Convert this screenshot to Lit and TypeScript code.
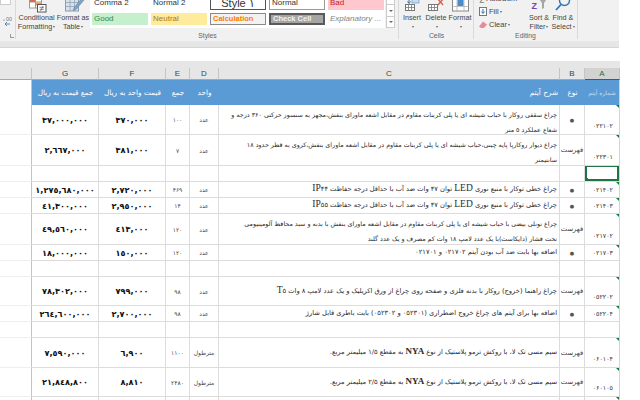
import { LitElement, html, css, svg } from "lit";
import { customElement } from "lit/decorators.js";

type Row = { h: number; g?: string; f?: string; e?: string; d?: string; c?: string[]; b?: string; a?: string; mark?: boolean; sel?: boolean };

const rows: Row[] = [
  { h: 30, g: "۳۷,۰۰۰,۰۰۰", f: "۳۷۰,۰۰۰", e: "۱۰۰", d: "عدد", c: ["چراغ سقفی روکار با حباب شیشه ای یا پلی کربنات مقاوم در مقابل اشعه ماورای بنفش،مجهز به سنسور حرکتی ۳۶۰ درجه و", "شعاع عملکرد ۵ متر"], b: "●", a: "۰۲۲۱۰۲", mark: true },
  { h: 31, g: "۲,٦٦۷,۰۰۰", f: "۳۸۱,۰۰۰", e: "۷", d: "عدد", c: ["چراغ دیوار روکارپا پایه چینی،حباب شیشه ای یا پلی کربنات مقاوم در مقابل اشعه ماورای بنفش،کروی به قطر حدود ۱۸", "سانتیمتر"], b: "فهرست", a: "۰۲۲۳۰۱", mark: true },
  { h: 16, sel: true },
  { h: 16, g: "۱,۲۷٥,٦۸۰,۰۰۰", f: "۲,۷۲۰,۰۰۰", e: "۴۶۹", d: "عدد", c: ["چراغ خطی توکار با منبع نوری LED توان ۴۷ وات ضد آب با حداقل درجه حفاظت IP۴۴"], b: "●", a: "۰۲۱۴۰۲", mark: true },
  { h: 16, g: "٤۱,۳۰۰,۰۰۰", f: "۲,۹٥۰,۰۰۰", e: "۱۴", d: "عدد", c: ["چراغ خطی توکار با منبع نوری LED توان ۴۷ وات ضد آب با حداقل درجه حفاظت IP۵۵"], b: "●", a: "۰۲۱۴۰۳", mark: true },
  { h: 31, g: "٤۹,٥٦۰,۰۰۰", f: "٤۱۳,۰۰۰", e: "۱۲۰", d: "عدد", c: ["چراغ تونلی بیضی با حباب شیشه ای یا پلی کربنات مقاوم در مقابل اشعه ماورای بنفش با بدنه و سبد محافظ آلومینیومی", "تحت فشار (دایکاست)با یک عدد لامپ ۱۸ وات کم مصرف و یک عدد گلند"], b: "فهرست", a: "۰۲۱۷۰۲", mark: true },
  { h: 16, g: "۱۸,۰۰۰,۰۰۰", f: "۱٥۰,۰۰۰", e: "۱۲۰", d: "عدد", c: ["اضافه بها بابت ضد آب بودن آیتم ۰۲۱۷۰۲ و ۰۲۱۷۰۱"], b: "●", a: "۰۲۱۷۰۳", mark: true },
  { h: 16 },
  { h: 29, g: "۷۸,۳۰۲,۰۰۰", f: "۷۹۹,۰۰۰", e: "۹۸", d: "عدد", c: ["چراغ راهنما (خروج) روکار با بدنه فلزی و صفحه روی چراغ از ورق اکریلیک و یک عدد لامپ ۸ وات T۵"], b: "فهرست", a: "۰۵۲۲۰۲", mark: true },
  { h: 16, g: "۲٦٤,٦۰۰,۰۰۰", f: "۲,۷۰۰,۰۰۰", e: "۹۸", d: "عدد", c: ["اضافه بها برای آیتم های چراغ خروج اضطراری (۰۵۲۳۰۱ و ۰۵۲۳۰۲) بابت باطری قابل شارژ"], b: "●", a: "۰۵۲۲۰۴", mark: true },
  { h: 16 },
  { h: 30, g: "۷,٥۹۰,۰۰۰", f: "٦,۹۰۰", e: "۱۱۰۰", d: "مترطول", c: ["سیم مسی تک لا، با روکش ترمو پلاستیک از نوع NYA به مقطع ۱/۵ میلیمتر مربع."], b: "فهرست", a: "۰۶۰۱۰۴", mark: true },
  { h: 29, g: "۲۱,۸٤۸,۸۰۰", f: "۸,۸۱۰", e: "۲۴۸۰", d: "مترطول", c: ["سیم مسی تک لا، با روکش ترمو پلاستیک از نوع NYA به مقطع ۲/۵ میلیمتر مربع."], b: "فهرست", a: "۰۶۰۱۰۵", mark: true },
  { h: 16, mark: true },
];

const icons = {
  cond: svg`<rect x="4.5" y="-2" width="12" height="10" fill="#fff" stroke="#9a9a9a"/><path d="M4.5 2h12M10.5 -2v10" stroke="#9a9a9a"/><rect x="5" y="-1" width="5" height="3" fill="#d9694f"/><rect x="11" y="2.5" width="5" height="3" fill="#e8a04f"/><rect x="12.5" y="4.5" width="8.5" height="7.5" fill="#fff" stroke="#555"/><path d="M14.5 7.3h4.5M14.5 9.3h4.5M18 6l-2.5 5" stroke="#444" stroke-width=".6" fill="none"/>`,
  table: svg`<rect x="4.5" y="-2" width="13" height="13" fill="#d5e2ee" stroke="#8c9cab"/><path d="M4.5 2.5h13M4.5 6.5h13M9 -2v13M13.500 -2v13" stroke="#8c9cab" stroke-width=".7"/><path d="M21 -2l-7.500 9-1.500 3.500 3.500-1.500 7.500-9z" fill="#7fa3c4" stroke="#5d7f9f" stroke-width=".5"/>`,
  insert: svg`<rect x="5.500" y="4.500" width="9" height="6" fill="#fff" stroke="#777"/><path d="M5.500 7.500h9M8.500 4.500v6M11.500 4.500v6" stroke="#777" stroke-width=".8"/><rect x="12" y="-2" width="7" height="5" fill="#c9dcee" stroke="#6b99c4" stroke-width=".7"/><path d="M9 0v3M7.500 1.500L9 3.500l1.500-2" stroke="#2e75b6" fill="none"/>`,
  del: svg`<rect x="4.500" y="4.500" width="9" height="6" fill="#fff" stroke="#777"/><path d="M4.500 7.500h9M7.500 4.500v6M10.500 4.500v6" stroke="#777" stroke-width=".8"/><path d="M14 -1l5 6M19 -1l-5 6" stroke="#d9604a" stroke-width="1.400"/>`,
  format: svg`<rect x="4.500" y="-2" width="16" height="13" fill="#fff" stroke="#888"/><path d="M4.500 6.500h16M9 -2v13M16 -2v13" stroke="#aaa" stroke-width=".7"/><rect x="9.500" y="-2" width="6" height="8" fill="#4a8ccb"/>`,
  sort: svg`<text x="4.500" y="8.500" font-size="9" font-family="Liberation Sans" font-weight="bold" fill="#7d3fb0">Z</text><path d="M11.500 -2h9l-3.500 5v5l-2 1V3z" fill="#a6a6a6"/>`,
  find: svg`<circle cx="13.500" cy="0.500" r="5" fill="none" stroke="#2e75b6" stroke-width="1.400"/><path d="M10 4.500l-5 5.500" stroke="#2e75b6" stroke-width="1.800"/>`,
};

@customElement("app-root")
export class AppRoot extends LitElement {
  static styles = css`
    :host { display: block; width: 640px; height: 400px; overflow: hidden; background: #fff; font-family: "Liberation Sans", sans-serif; }
    .frame { width: 620px; height: 400px; display: flex; flex-direction: column; overflow: hidden; }
    .ribbon { height: 41px; width: 619px; background: #f1f1f1; display: flex; flex: none; color: #444; font-size: 7.2px; overflow: hidden; }
    .tail { height: 7px; width: 619px; flex: none; background: #e6e6e6; border-bottom: 1px solid #d6d6d6; box-sizing: border-box; }
    .bar { height: 13px; flex: none; background: #fff; }
    .group { display: flex; flex-direction: column; border-right: 1px solid #d9d9d9; flex: none; box-sizing: border-box; height: 39px; }
    .gbody { height: 32px; display: flex; flex: none; }
    .glabel { height: 7px; font-size: 6.8px; line-height: 8px; text-align: center; color: #666; white-space: nowrap; }
    .left { width: 16px; position: relative; }
    .combo { width: 11px; height: 5px; background: #fff; border: 1px solid #ccc; border-top: 0; box-sizing: border-box; }
    .leftbody { display: flex; flex-direction: column; }
    .dec { display: block; margin-top: 10px; }
    .launch { position: absolute; left: 10px; bottom: 1px; width: 4px; height: 4px; border: 1px solid #999; box-sizing: border-box; border-top: 0; border-right: 0; }
    .stylesgroup { width: 383px; padding-left: 1px; }
    .cellsgroup { width: 75px; padding-left: 1px; }
    .editing { width: 104px; padding-left: 5px; }
    .editing .glabel { margin-left: -5px; }
    .big { display: flex; flex-direction: column; align-items: center; text-align: center; line-height: 9px; white-space: nowrap; flex: none; }
    .big svg { display: block; height: 13px; width: 24px; flex: none; overflow: visible; }
    .w39 { width: 39px; }
    .w34 { width: 34px; }
    .w24 { width: 24px; }
    .w26 { width: 26px; }
    .w22 { width: 22px; }
    .caret { display: inline-block; width: 0; height: 0; border-left: 1.5px solid transparent; border-right: 1.5px solid transparent; border-top: 2px solid #666; vertical-align: 1px; margin-left: 1px; }
    .gallery { flex: none; width: 295px; height: 28px; background: #fff; display: grid; grid-template-columns: repeat(5, 56px); grid-template-rows: 10px 12px; gap: 3px; padding: 0 0 0 2px; box-sizing: border-box; overflow: hidden; }
    .sty { font-size: 8px; line-height: 12px; padding-left: 2px; white-space: nowrap; overflow: hidden; color: #333; box-sizing: border-box; }
    .top { line-height: 6px; }
    .good { background: #c6efce; color: #2f8a3e; }
    .neutral { background: #ffeb9c; color: #a8771a; }
    .calc { background: #f2f2f2; color: #fa7d00; border: 1px solid #8a8a8a; line-height: 10px; font-weight: bold; font-size: 7.5px; }
    .check { background: #a5a5a5; color: #f2f2f2; border: 2px solid #5a5a5a; line-height: 8px; font-weight: bold; font-size: 7.5px; }
    .expl { font-style: italic; color: #7f7f7f; }
    .bad { background: #ffc7ce; color: #c0182a; }
    .style1 { border: 1px solid #555; border-top: 0; font-size: 11px; text-align: center; line-height: 6px; padding-left: 0; }
    .normal { border: 1px solid #999; border-top: 0; line-height: 5px; }
    .scroll { width: 9px; margin-left: 1px; display: flex; flex-direction: column; height: 28px; flex: none; }
    .scroll i { border: 1px solid #ccc; border-top: 0; background: #fff; box-sizing: border-box; font-style: normal; display: flex; align-items: center; justify-content: center; }
    .scroll i span { width: 0; height: 0; border-left: 2px solid transparent; border-right: 2px solid transparent; border-top: 2px solid #666; }
    .s1 { height: 5px; }
    .s2 { height: 12px; }
    .s3 { height: 11px; }
    .list { width: 47px; flex: none; margin-top: -8px; font-size: 7.5px; }
    .list div { display: flex; align-items: center; gap: 2px; height: 13px; white-space: nowrap; }
    .sheet { flex: none; width: 620px; overflow: hidden; background: #e6e6e6; padding-top: 7px; }
    table { border-collapse: separate; border-spacing: 0; table-layout: fixed; width: 620px; background: #fff; }
    td, th { padding: 0; overflow: hidden; box-sizing: border-box; }
    .c0 { width: 32px; }
    .c1, .c2 { width: 67px; }
    .c3 { width: 24px; }
    .c4 { width: 29px; }
    .c5 { width: 341px; }
    .c6 { width: 25px; }
    .c7 { width: 35px; }
    .hd th { height: 12px; background: #e6e6e6; border-right: 1px solid #c4c4c4; border-bottom: 1px solid #a8a8a8; font-weight: normal; font-size: 8px; color: #444; line-height: 11px; text-align: center; }
    .hd th.on { background: #d2d2d2; color: #217346; border-bottom: 1px solid #217346; }
    .blue td { height: 25px; background: #5b9bd5; color: #fff; font-family: "DejaVu Sans", sans-serif; font-size: 7.300px; text-align: center; white-space: nowrap; }
    .blue td.corner { background: #fff; border-right: 1px solid #c4c4c4; }
    .blue td.dim { color: #c6dcf0; font-size: 6px; }
    .blue td.r { text-align: right; padding-right: 2px; }
    .blue td.end { border-right: 1px solid #d4d4d4; }
    .row td { border-right: 1px solid #dcdcdc; border-bottom: 1px solid #dcdcdc; font-family: "DejaVu Sans", sans-serif; color: #222; font-size: 7px; text-align: center; white-space: nowrap; vertical-align: middle; position: relative; }
    .row td.corner { border-right: 1px solid #c4c4c4; border-bottom: 1px solid #eeeeee; }
    .row td.num { font-weight: bold; font-size: 8.200px; color: #111; }
    .row td.sm { font-size: 6px; color: #444; }
    .row td.desc { text-align: right; padding-right: 2px; font-size: 6.700px; line-height: 15px; vertical-align: top; direction: rtl; color: #2a2a2a; }
    .row td.desc.one { vertical-align: middle; }
    .lines { height: 24px; padding-top: 2px; font-size: 6.350px; }
    .latin { font-family: "Liberation Serif", serif; font-size: 9.500px; line-height: 10px; }
    .bold { font-weight: bold; font-size: 9px; }
    .row td.kind { font-size: 6.800px; color: #444; }
    .row td.kind.dot { font-size: 5px; color: #555; }
    .row td.code { vertical-align: bottom; font-size: 6.300px; color: #333; line-height: 10px; text-align: right; padding: 0 6px 3px 0; letter-spacing: .5px; border-right: 1px solid #d4d4d4; }
    .row.short td.code { padding-bottom: 2px; }
    .tri { position: absolute; top: 0; right: 0; width: 0; height: 0; border-top: 3px solid #107c41; border-left: 3px solid transparent; }
    .sel { position: absolute; inset: -1px 0 0 0; border: 2px solid #217346; box-sizing: border-box; }
    .handle { position: absolute; left: 0; bottom: 0; width: 3px; height: 3px; background: #217346; }
  `;

  bigBtn(l1: string, l2: string, icon: unknown, cls: string) {
    return html`<div class="big ${cls}">
      <svg viewBox="0 0 24 13">${icon}</svg>
      <div>${l1}</div><div>${l2}<span class="caret"></span></div>
    </div>`;
  }

  desc(l: string) {
    return l.split(/([A-Za-z]+)/).map((p, i) =>
      i % 2 ? html`<span class="latin ${p === "NYA" ? "bold" : ""}">${p}</span>` : p);
  }

  render() {
    return html`<div class="frame">
      <div class="ribbon">
        <div class="group left">
          <div class="gbody leftbody">
            <div class="combo"></div>
            <svg class="dec" width="14" height="11" viewBox="0 0 14 11"><text x="6" y="6" font-size="5.500" fill="#777" font-family="Liberation Sans">00</text><circle cx="4" cy="5" r=".6" fill="#555"/><path d="M10 9H5M7 7L5 9l2 2" stroke="#2e75b6" fill="none" stroke-width=".8"/></svg>
          </div>
          <span class="launch"></span>
        </div>
        <div class="group stylesgroup">
          <div class="gbody">
            ${this.bigBtn("Conditional", "Formatting", icons.cond, "w39")}
            ${this.bigBtn("Format as", "Table", icons.table, "w34")}
            <div class="gallery">
              <div class="sty top">Comma 2</div>
              <div class="sty top">Normal 2</div>
              <div class="sty top style1">Style ۱</div>
              <div class="sty top normal">Normal</div>
              <div class="sty top bad">Bad</div>
              <div class="sty good">Good</div>
              <div class="sty neutral">Neutral</div>
              <div class="sty calc">Calculation</div>
              <div class="sty check">Check Cell</div>
              <div class="sty expl">Explanatory ...</div>
            </div>
            <div class="scroll"><i class="s1"></i><i class="s2"><span></span></i><i class="s3"><span></span></i></div>
          </div>
          <div class="glabel">Styles</div>
        </div>
        <div class="group cellsgroup">
          <div class="gbody">
            ${this.bigBtn("Insert", "", icons.insert, "w24")}
            ${this.bigBtn("Delete", "", icons.del, "w24")}
            ${this.bigBtn("Format", "", icons.format, "w24")}
          </div>
          <div class="glabel">Cells</div>
        </div>
        <div class="group editing">
          <div class="gbody">
            <div class="list">
              <div><span>∑</span><span>AutoSum</span></div>
              <div><svg width="8" height="9" viewBox="0 0 8 9"><rect x=".5" y=".5" width="7" height="8" fill="#fff" stroke="#777"/><path d="M4 2v4M2.300 4.500L4 6.500l1.700-2" stroke="#2e75b6" fill="none"/></svg><span>Fill<span class="caret"></span></span></div>
              <div><svg width="8" height="8" viewBox="0 0 8 8"><path d="M0 5.500l4-5 4 3-3 3.500H2z" fill="#e88a9a"/></svg><span>Clear<span class="caret"></span></span></div>
            </div>
            ${this.bigBtn("Sort &", "Filter", icons.sort, "w26")}
            ${this.bigBtn("Find &", "Select", icons.find, "w22")}
          </div>
          <div class="glabel">Editing</div>
        </div>
      </div>
      <div class="tail"></div>
      <div class="bar"></div>
      <div class="sheet">
        <table>
          <colgroup>
            <col class="c0"/><col class="c1"/><col class="c2"/><col class="c3"/><col class="c4"/><col class="c5"/><col class="c6"/><col class="c7"/>
          </colgroup>
          <tr class="hd"><th></th><th>G</th><th>F</th><th>E</th><th>D</th><th>C</th><th>B</th><th class="on">A</th></tr>
          <tr class="blue">
            <td class="corner"></td>
            <td>جمع قیمت به ریال</td><td>قیمت واحد به ریال</td><td>جمع</td><td>واحد</td>
            <td class="r">شرح آیتم</td><td>نوع</td><td class="dim end">شماره آیتم</td>
          </tr>
          ${rows.map((r) => {
            const multi = !!r.c && r.c.length > 1;
            return html`<tr class="row ${r.h <= 16 ? "short" : ""}" style="height:${r.h}px">
              <td class="corner"></td>
              <td class="num">${r.g ?? ""}</td>
              <td class="num">${r.f ?? ""}</td>
              <td class="sm">${r.e ?? ""}</td>
              <td class="sm">${r.d ?? ""}</td>
              <td class="desc ${multi ? "" : "one"}">${multi
                ? html`<div class="lines">${r.c!.map((l) => html`<div>${this.desc(l)}</div>`)}</div>`
                : (r.c ?? []).map((l) => this.desc(l))}</td>
              <td class="kind ${r.b === "●" ? "dot" : ""}">${r.b ?? ""}</td>
              <td class="code">${r.a ?? ""}${r.mark ? html`<span class="tri"></span>` : ""}${r.sel ? html`<span class="sel"></span><span class="handle"></span>` : ""}</td>
            </tr>`;
          })}
        </table>
      </div>
    </div>`;
  }
}
